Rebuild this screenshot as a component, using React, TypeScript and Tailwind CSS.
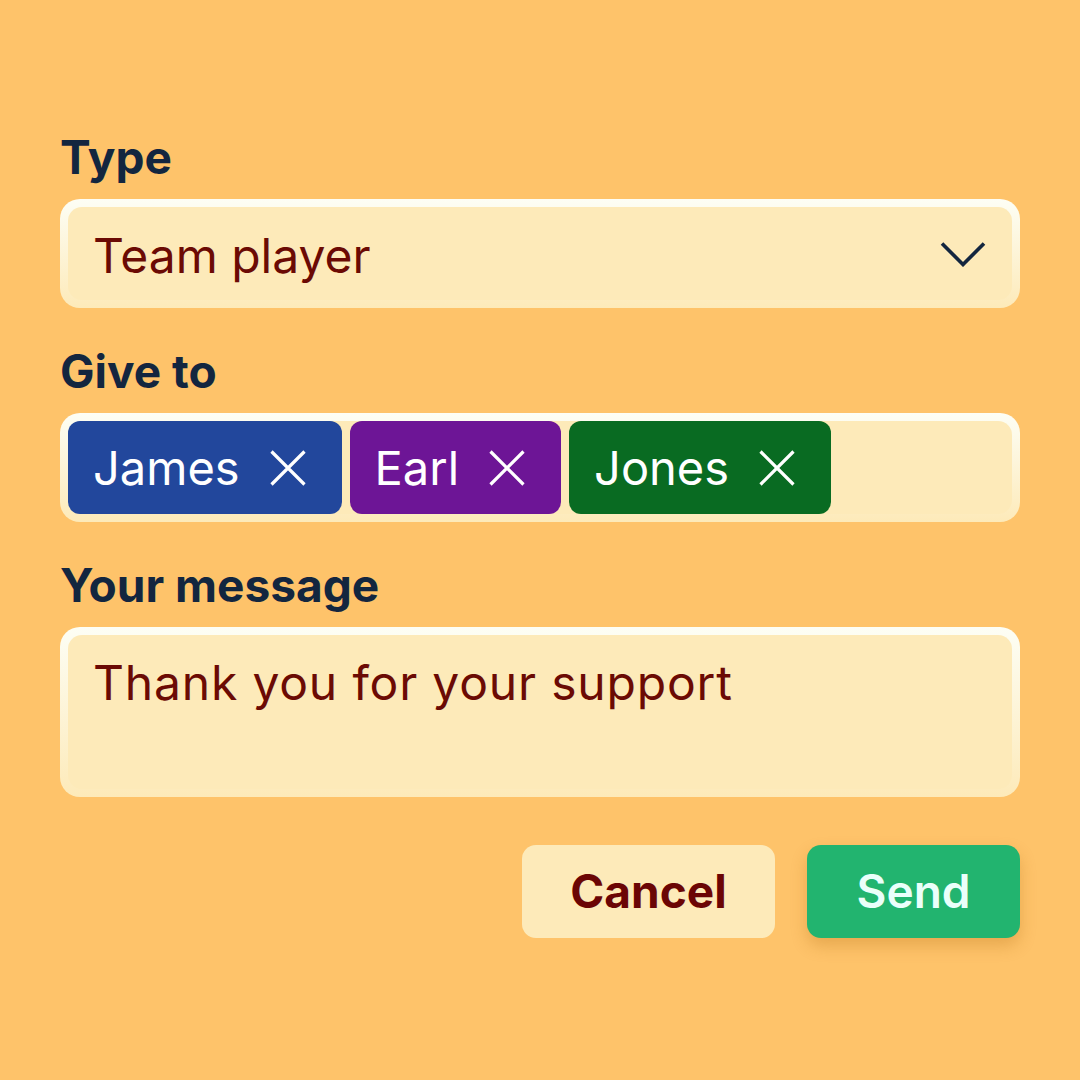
const font = { fontFamily: 'Inter, "Liberation Sans", sans-serif' };

interface TagProps {
  name: string;
  color: string;
}

const Cross = () => (
  <svg width="36" height="36" viewBox="0 0 36 36" fill="none" stroke="white" strokeWidth="3.2">
    <path d="M1.5 1.5 34.5 34.5M34.5 1.5 1.5 34.5" />
  </svg>
);

const Chevron = () => (
  <svg width="46" height="26" viewBox="0 0 46 26" fill="none" stroke="#13263f" strokeWidth="3.6">
    <path d="M2 2.5 23 23.5 44 2.5" />
  </svg>
);

const Tag = ({ name, color }: TagProps) => {
  return (
    <div className={`flex items-center h-[93px] pl-[25px] pr-[36px] gap-[30px] rounded-[12px] ${color}`}>
      <span className="text-[47px] leading-none text-white">{name}</span>
      <Cross />
    </div>
  );
};

// soft field: white lip on top that fades into the fill toward the bottom
const Field = ({ children, className }: { children: React.ReactNode; className?: string }) => {
  return (
    <div className={`rounded-[20px] p-[8px] bg-gradient-to-b from-[#fdfef5] to-[#fdeab9] ${className ?? ''}`}>
      <div className="h-full rounded-[14px] bg-[#fdeab9]">{children}</div>
    </div>
  );
};

const Label = ({ children, className }: { children: React.ReactNode; className?: string }) => (
  <h3 className={`text-[46px] leading-none font-bold text-[#13263f] ${className ?? ''}`}>{children}</h3>
);

export default function App() {
  const tags = [
    { name: 'James', color: 'bg-[#22479c]' },
    { name: 'Earl', color: 'bg-[#6d1596]' },
    { name: 'Jones', color: 'bg-[#096b22]' },
  ];

  return (
    <div style={font} className="w-[1080px] h-[1080px] bg-[#fec36a] px-[60px] pt-[134px]">
      <Label className="mb-[19px]">Type</Label>
      <Field className="h-[109px]">
        <div className="flex items-center justify-between h-full pl-[25px] pr-[26px]">
          <span className="text-[48px] leading-none text-[#6b0a04] translate-y-[2px]">Team player</span>
          <Chevron />
        </div>
      </Field>

      <Label className="mt-[40px] mb-[19px]">Give to</Label>
      <Field className="h-[109px]">
        <div className="flex items-center gap-[8px] h-full">
          {tags.map((tag) => (
            <Tag key={tag.name} {...tag} />
          ))}
        </div>
      </Field>

      <Label className="mt-[40px] mb-[19px]">Your message</Label>
      <Field className="h-[170px]">
        <p className="pl-[25px] pt-[24px] text-[48px] leading-none tracking-[0.017em] text-[#6b0a04]">
          Thank you for your support
        </p>
      </Field>

      <div className="flex justify-end gap-[32px] mt-[48px]">
        <button className="w-[253px] h-[93px] rounded-[14px] bg-[#fdeab9] text-[46px] font-bold text-[#6b0505]">
          Cancel
        </button>
        <button className="w-[213px] h-[93px] rounded-[14px] bg-[#22b46f] text-[46px] font-semibold text-[#eafffa] shadow-[0_8px_16px_rgba(180,110,20,0.3)]">
          Send
        </button>
      </div>
    </div>
  );
}
